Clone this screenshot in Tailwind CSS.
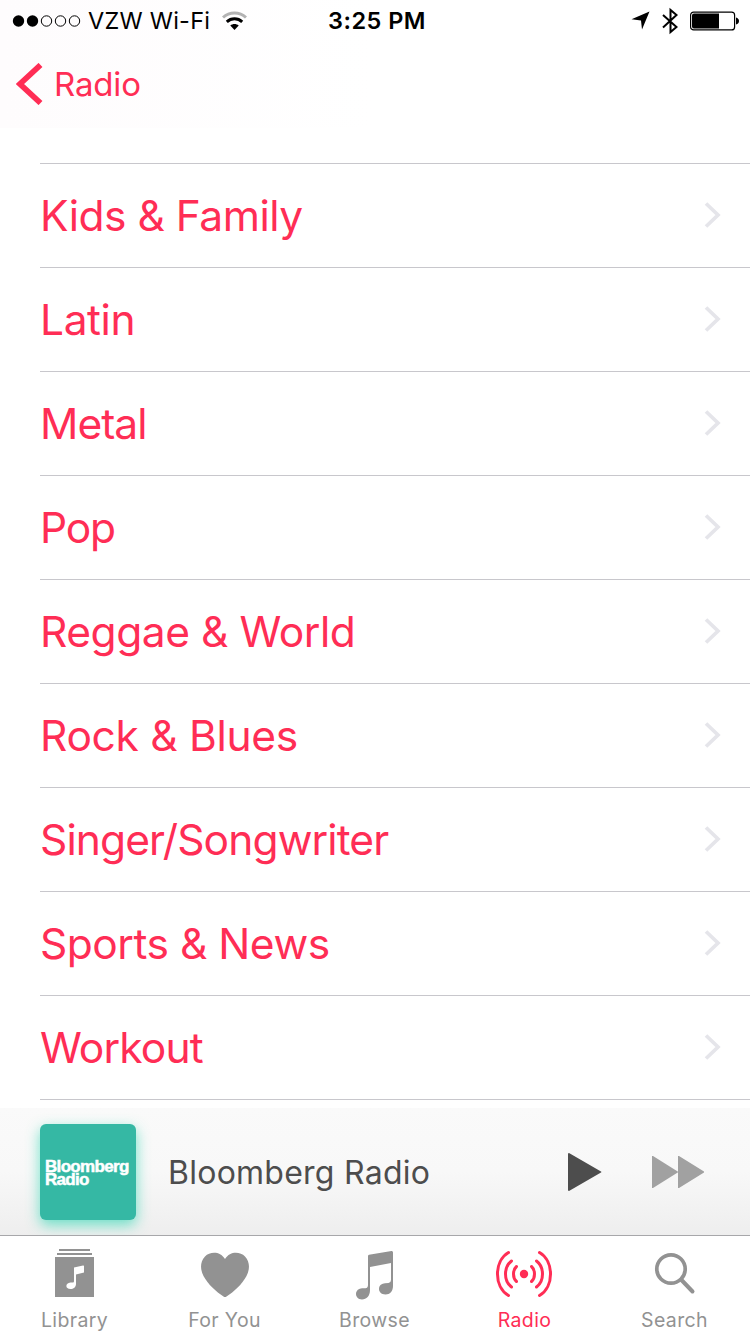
<!DOCTYPE html>
<html lang="en">
<head>
<meta charset="utf-8">
<title>Radio</title>
<script src="https://cdn.jsdelivr.net/npm/@tailwindcss/browser@4"></script>
</head>
<body class="bg-white">
<div class="flex h-[1334px] w-[750px] flex-col overflow-hidden bg-white font-['Inter',sans-serif] text-[#ff2d55]">
  <header class="h-32 shrink-0 bg-linear-to-r from-[#fefcfd] to-white to-50%">
    <div class="grid h-[42px] grid-cols-[1fr_auto_1fr] items-center pr-[11px] pl-3 text-black">
      <div class="flex items-center">
        <svg class="-mt-px h-4 w-[70px]" viewBox="0 0 70 16"><circle cx="6.5" cy="8" r="5.7"/><circle cx="20.5" cy="8" r="5.7"/><g fill="none" stroke="#000" stroke-width="1"><circle cx="34.5" cy="8" r="5.2"/><circle cx="48.5" cy="8" r="5.2"/><circle cx="62.5" cy="8" r="5.2"/></g></svg>
        <span class="ml-[6px] w-[122px] text-[23.5px] leading-[42px] tracking-[0.25px] whitespace-nowrap">VZW Wi-Fi</span>
        <svg class="-mt-px ml-3 h-5 w-[25px]" viewBox="0 0 25 20"><g fill="none" stroke-width="3"><path d="M1 6.500C7.500.500 17.500.500 24 6.500" stroke="#b3b3b3"/><path d="M4.800 10.800C9.200 6.800 15.800 6.800 20.200 10.800" stroke="#000"/></g><path d="M8.300 14.500C10.800 12.500 14.200 12.500 16.700 14.500L12.500 18.900Z"/></svg>
      </div>
      <div class="ml-[3px] text-[23.5px] leading-[42px] font-semibold tracking-[0.45px] whitespace-nowrap">3:25 PM</div>
      <div class="-mt-px flex items-center justify-end">
        <svg class="h-[19px] w-[19px]" viewBox="0 0 19 19"><path d="M18.500 .5L11 18.500L10 9.500L.5 8.200Z"/></svg>
        <svg class="ml-3 h-7 w-4" viewBox="0 0 16 28"><path d="M1 8L14.500 20L8.500 25V3L14.500 8L1 20.500" fill="none" stroke="#000" stroke-width="2"/></svg>
        <svg class="ml-3 h-5 w-[49px]" viewBox="0 0 49 20"><rect x=".6" y="1.100" width="44" height="17.800" rx="3" fill="none" stroke="#000" stroke-width="1.200"/><path d="M4 2.500H29V17.500H4Q2 17.500 2 15.500V4.500Q2 2.500 4 2.500ZM46 6.500Q49 7.500 49 10Q49 12.500 46 13.500Z"/></svg>
      </div>
    </div>
    <div class="flex h-[86px] items-center pl-4">
      <svg class="-mt-[2px] h-[42px] w-[27px]" viewBox="0 0 27 42"><path d="M24.500 2L4 21L24.500 40" fill="none" stroke="#ff2d55" stroke-width="5.700"/></svg>
      <span class="ml-[11px] text-[33px] tracking-[-0.15px]">Radio</span>
    </div>
  </header>

  <main class="h-[980px] shrink-0 pt-[35px] pl-10 text-[42.5px]">
    <ul class="[&>li]:flex [&>li]:h-[104px] [&>li]:items-center [&>li]:justify-between [&>li]:border-t [&>li]:border-[#c8c7cc] [&>li]:pr-[29px] [&_svg]:-mt-[2px]">
      <li><span class="tracking-[-0.5px]">Kids &amp; Family</span><svg class="h-[26px] w-[17px]" viewBox="0 0 17 26"><path d="M2 1.500L14 13L2 24.500" fill="none" stroke="#e5e5ea" stroke-width="3.700"/></svg></li>
      <li><span class="tracking-[-0.4px]">Latin</span><svg class="h-[26px] w-[17px]" viewBox="0 0 17 26"><path d="M2 1.500L14 13L2 24.500" fill="none" stroke="#e5e5ea" stroke-width="3.700"/></svg></li>
      <li><span class="tracking-[-1px]">Metal</span><svg class="h-[26px] w-[17px]" viewBox="0 0 17 26"><path d="M2 1.500L14 13L2 24.500" fill="none" stroke="#e5e5ea" stroke-width="3.700"/></svg></li>
      <li><span class="tracking-[-1.2px]">Pop</span><svg class="h-[26px] w-[17px]" viewBox="0 0 17 26"><path d="M2 1.500L14 13L2 24.500" fill="none" stroke="#e5e5ea" stroke-width="3.700"/></svg></li>
      <li><span class="tracking-[-0.45px]">Reggae &amp; World</span><svg class="h-[26px] w-[17px]" viewBox="0 0 17 26"><path d="M2 1.500L14 13L2 24.500" fill="none" stroke="#e5e5ea" stroke-width="3.700"/></svg></li>
      <li><span class="tracking-[-0.3px]">Rock &amp; Blues</span><svg class="h-[26px] w-[17px]" viewBox="0 0 17 26"><path d="M2 1.500L14 13L2 24.500" fill="none" stroke="#e5e5ea" stroke-width="3.700"/></svg></li>
      <li><span class="tracking-[-0.88px]">Singer/Songwriter</span><svg class="h-[26px] w-[17px]" viewBox="0 0 17 26"><path d="M2 1.500L14 13L2 24.500" fill="none" stroke="#e5e5ea" stroke-width="3.700"/></svg></li>
      <li><span class="tracking-[-0.48px]">Sports &amp; News</span><svg class="h-[26px] w-[17px]" viewBox="0 0 17 26"><path d="M2 1.500L14 13L2 24.500" fill="none" stroke="#e5e5ea" stroke-width="3.700"/></svg></li>
      <li><span class="tracking-[-0.85px]">Workout</span><svg class="h-[26px] w-[17px]" viewBox="0 0 17 26"><path d="M2 1.500L14 13L2 24.500" fill="none" stroke="#e5e5ea" stroke-width="3.700"/></svg></li>
    </ul>
    <div class="h-px bg-[#c8c7cc]"></div>
  </main>

  <section class="flex h-[127px] shrink-0 items-center bg-linear-to-b from-[#fafafa] via-[#f8f8f8] to-[#eeeeee] pl-10">
    <div class="flex h-24 w-24 items-center rounded-md bg-[#35b8a4] pl-[5px] shadow-[0_5px_14px_rgba(50,215,180,0.7)]">
      <div class="pt-[3px] font-['Liberation_Sans',Arial,sans-serif] text-[17px] leading-[13px] font-bold tracking-[-0.68px] text-white [-webkit-text-stroke:0.5px_white]">Bloomberg<br>Radio</div>
    </div>
    <span class="ml-8 w-[400px] pt-[2px] text-[32px] tracking-[0.25px] text-[#4d4d4d]">Bloomberg Radio</span>
    <svg class="h-[38px] w-[34px]" viewBox="0 0 34 38"><path d="M1 0L33 18.500Q34 19 33 19.500L1 38Q0 38 0 37V1Q0 0 1 0Z" fill="#4d4d4d"/></svg>
    <svg class="ml-[50px] h-8 w-[53px]" viewBox="0 0 53 32"><path d="M1 0L26.500 16L1 32H0V0ZM27 0L52 15.500V16.500L27 32H26V0Z" fill="#a1a1a1"/></svg>
  </section>

  <nav class="grid h-[99px] w-[750px] shrink-0 grid-cols-[repeat(5,150px)] border-t border-[#a7a7aa] bg-white text-center text-[19.5px] leading-6 tracking-[0.35px] text-[#929292] [&_span]:-ml-px">
    <div class="flex flex-col items-center pt-3">
      <svg class="h-[60px] w-[60px]" viewBox="0 0 60 60" fill="#929292"><path d="M14 1H45V3H14ZM12 5H47V7H12ZM10 9H49V49H10Z"/><path d="M29 19.500L38 17.500Q39 17.300 39 18V24.500L31 26.500V36C31 39 28.500 41 25.500 41C20 41 20 35 25.500 34.500H27.500C29 34.500 29 34 29 32Z" fill="#fff"/></svg>
      <span>Library</span>
    </div>
    <div class="flex flex-col items-center pt-3">
      <svg class="h-[60px] w-[60px]" viewBox="0 0 60 60"><path d="M30 11C35 3 45 3.500 50 8.500C55 14 55 21 51.500 28C47 36.500 39 43.500 31.500 48.500Q30 49.500 28.500 48.500C21 43.500 13 36.500 8.500 28C5 21 5 14 10 8.500C15 3.500 25 3 30 11Z" fill="#929292"/></svg>
      <span>For You</span>
    </div>
    <div class="flex flex-col items-center pt-3">
      <svg class="h-[60px] w-[60px]" viewBox="0 0 60 60"><path d="M23 8Q23 7 24 6.800L46.500 3Q48 2.800 48 4.500V38C48 43 45 46.500 40.500 46.500C36 46.500 34 43.500 34 41C34 37 37 35.500 40 35.200L43.500 35Q46 34.500 46 32V15L25 19V42C25 48 21.500 51.500 17 51.500C13 51.500 11 48.500 11 46C11 42.500 14 40.300 17 40.200H20.500Q23 40 23 37Z" fill="#929292"/></svg>
      <span>Browse</span>
    </div>
    <div class="flex flex-col items-center pt-3 text-[#ff2d55]">
      <svg class="h-[60px] w-[60px]" viewBox="0 0 60 60"><circle cx="29" cy="26" r="4.200" fill="#ff2d55"/><g fill="none" stroke="#ff2d55" stroke-width="3" stroke-linecap="round"><path d="M13.500 4.500C-1.200 13 -1.200 39 13.500 47.500M16.500 13C8.500 19 8.500 33 16.500 39M21.500 18.500C17.500 22 17.500 30 21.500 33.500M44.500 4.500C59.200 13 59.200 39 44.500 47.500M41.500 13C49.500 19 49.500 33 41.500 39M36.500 18.500C40.500 22 40.500 30 36.500 33.500"/></g></svg>
      <span>Radio</span>
    </div>
    <div class="flex flex-col items-center pt-3">
      <svg class="h-[60px] w-[60px]" viewBox="0 0 60 60" fill="none" stroke="#929292"><circle cx="26" cy="21" r="14.200" stroke-width="3.700"/><path d="M36.500 32L47.500 43.500" stroke-width="4" stroke-linecap="round"/></svg>
      <span>Search</span>
    </div>
  </nav>
</div>
</body>
</html>
